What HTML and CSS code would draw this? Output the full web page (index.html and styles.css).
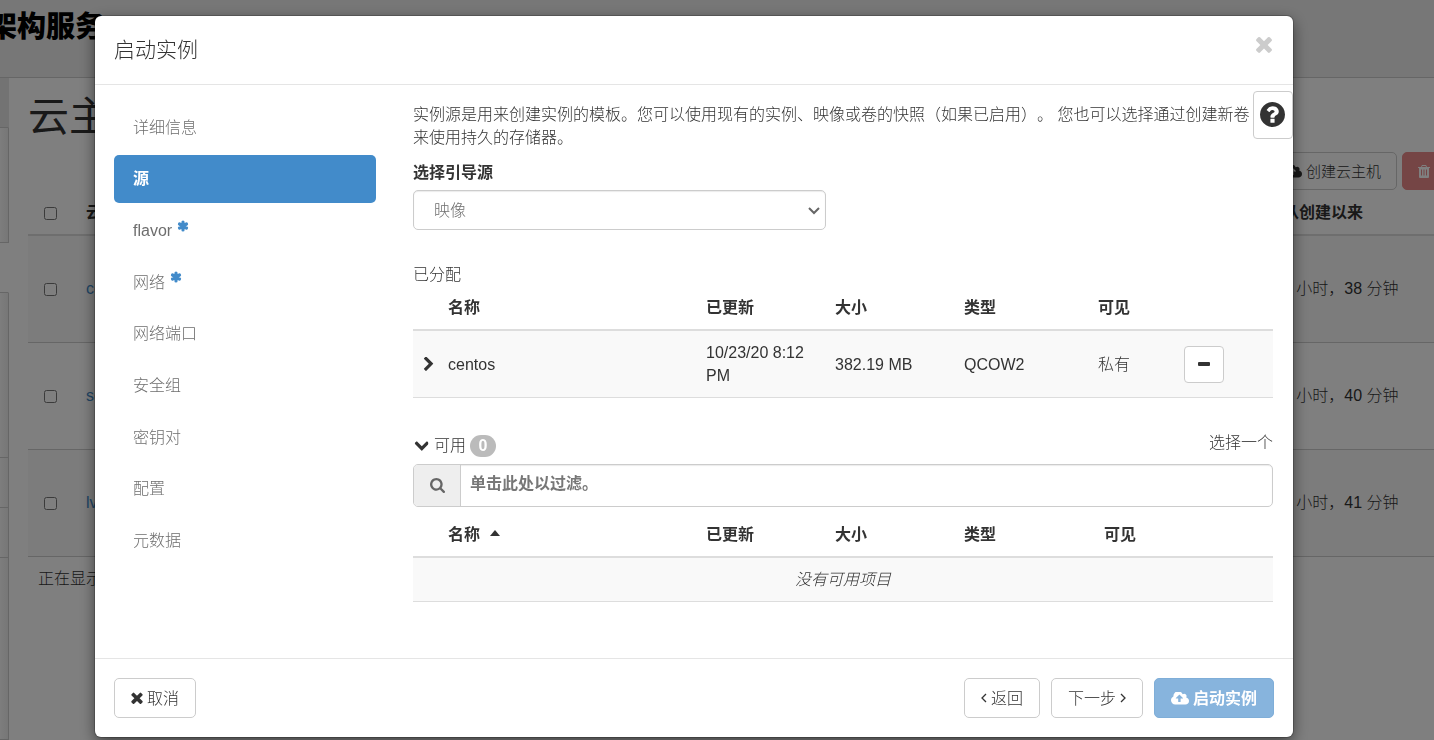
FILE: index.html
```html
<!DOCTYPE html>
<html lang="zh-CN">
<head>
<meta charset="utf-8">
<title>启动实例</title>
<link rel="stylesheet" href="styles.css">
</head>
<body>
<svg class="sprite" aria-hidden="true">
  <symbol id="times" viewBox="302 302 1188 1252"><path d="M1490 1322q0 40-28 68l-136 136q-28 28-68 28t-68-28l-294-294-294 294q-28 28-68 28t-68-28l-136-136q-28-28-28-68t28-68l294-294-294-294q-28-28-28-68t28-68l136-136q28-28 68-28t68 28l294 294 294-294q28-28 68-28t68 28l136 136q28 28 28 68t-28 68l-294 294 294 294q28 28 28 68z"/></symbol>
  <symbol id="chevron" viewBox="330 80 1060 1570"><path d="M1363 877l-742 742q-19 19-45 19t-45-19l-166-166q-19-19-19-45t19-45l531-531-531-531q-19-19-19-45t19-45l166-166q19-19 45-19t45 19l742 742q19 19 19 45t-19 45z"/></symbol>
  <symbol id="question" viewBox="128 128 1536 1536"><path d="M1024 1376v-192q0-14-9-23t-23-9h-192q-14 0-23 9t-9 23v192q0 14 9 23t23 9h192q14 0 23-9t9-23zm256-672q0-88-55.500-163t-138.500-116-170-41q-243 0-371 213-15 24 8 42l132 100q7 6 19 6 16 0 25-12 53-68 86-92 34-24 86-24 48 0 85.500 26t37.500 59q0 38-20 61t-68 45q-63 28-115.500 86.500t-52.500 125.500v36q0 14 9 23t23 9h192q14 0 23-9t9-23q0-19 21.500-49.500t54.500-49.500q32-18 49-28.500t46-35 44.500-48 28-60.500 12.500-81zm384 192q0 209-103 385.500t-279.500 279.500-385.500 103-385.500-103-279.500-279.500-103-385.500 103-385.500 279.500-279.500 385.500-103 385.500 103 279.500 279.500 103 385.500z"/></symbol>
  <symbol id="cloud" viewBox="-64 256 1920 1280"><path d="M1216 864q0-14-9-23l-352-352q-9-9-23-9t-23 9l-351 351q-10 12-10 24 0 14 9 23t23 9h224v352q0 13 9.500 22.500t22.500 9.500h192q13 0 22.500-9.500t9.500-22.500v-352h224q13 0 22.500-9.500t9.500-22.500zm640 288q0 159-112.500 271.500t-271.500 112.500h-1088q-185 0-316.500-131.500t-131.500-316.500q0-130 70-240t188-165q-2-30-2-43 0-212 150-362t362-150q156 0 285.500 87t188.500 231q71-62 166-62 106 0 181 75t75 181q0 76-41 138 130 31 213.500 135.500t83.500 238.500z"/></symbol>
  <symbol id="search" viewBox="64 128 1664 1664"><path d="M1216 832q0-185-131.500-316.500t-316.500-131.500-316.500 131.500-131.500 316.500 131.500 316.500 316.500 131.500 316.500-131.500 131.500-316.500zm512 832q0 52-38 90t-90 38q-54 0-90-38l-343-342q-179 124-399 124-143 0-273.500-55.500t-225-150-150-225-55.500-273.500 55.500-273.500 150-225 225-150 273.500-55.500 273.500 55.500 225 150 150 225 55.500 273.500q0 220-124 399l343 343q37 37 37 90z"/></symbol>
  <symbol id="asterisk" viewBox="0 0 12 12"><path d="M6 2v8M2.500 4l7 4M9.500 4l-7 4" fill="none" stroke="currentColor" stroke-width="3.200" stroke-linecap="round"/></symbol>
  <symbol id="angle" viewBox="0 0 6 10"><path d="M1 1l4 4-4 4" fill="none" stroke="currentColor" stroke-width="1.300"/></symbol>
  <symbol id="trash" viewBox="0 0 12 13"><path fill-rule="evenodd" d="M4 0h4l1 2h3v1h-1v9q0 1-1 1H2q-1 0-1-1V3H0V2h3zM4.400 1L4 2h4l-.4-1zM3 4.500v6h1v-6zM5.500 4.500v6h1v-6zM8 4.500v6h1v-6z"/></symbol>
</svg>

<div class="page">
  <header class="brand"><span class="brand-name">架构服务</span></header>
  <div class="columns">
    <nav class="sidebar" aria-label="侧边栏">
      <div class="side-top"></div>
      <div class="side-group"></div>
      <div class="side-current"></div>
      <div class="side-rest"></div>
      <div class="side-item"></div>
      <div class="side-item"></div>
      <div class="side-end"></div>
    </nav>
    <main class="content">
      <h1 class="page-title">云主机</h1>
      <div class="toolbar">
        <button class="tool" type="button"><svg class="cloud-icon"><use href="#cloud"/></svg>创建云主机</button>
        <button class="tool tool-danger" type="button"><svg class="trash-icon"><use href="#trash"/></svg>删除实例</button>
      </div>
      <table class="instances">
        <thead><tr><th class="check-cell"><input type="checkbox" aria-label="全选"></th><th>云主机名称</th><th class="age-cell">从创建以来</th></tr></thead>
        <tbody>
          <tr><td><input type="checkbox" aria-label="选择 centos"></td><td><a href="#">centos</a></td><td>1 小时，38 分钟</td></tr>
          <tr><td><input type="checkbox" aria-label="选择 server"></td><td><a href="#">server</a></td><td>1 小时，40 分钟</td></tr>
          <tr><td><input type="checkbox" aria-label="选择 lvs"></td><td><a href="#">lvs</a></td><td>1 小时，41 分钟</td></tr>
        </tbody>
      </table>
      <p class="count">正在显示 3 项</p>
    </main>
  </div>
</div>

<div class="backdrop">
  <section class="modal" role="dialog" aria-labelledby="modal-title">
    <header class="modal-header">
      <h2 class="modal-title" id="modal-title">启动实例</h2>
      <button class="close" type="button" aria-label="关闭"><svg class="close-icon"><use href="#times"/></svg></button>
    </header>
    <div class="modal-body">
      <button class="help" type="button" aria-label="帮助"><svg class="help-icon"><use href="#question"/></svg></button>
      <nav class="steps" aria-label="步骤">
        <a class="step" href="#">详细信息</a>
        <a class="step step-active" href="#" aria-current="step">源</a>
        <a class="step" href="#">flavor<svg class="required"><use href="#asterisk"/></svg></a>
        <a class="step" href="#">网络<svg class="required"><use href="#asterisk"/></svg></a>
        <a class="step" href="#">网络端口</a>
        <a class="step" href="#">安全组</a>
        <a class="step" href="#">密钥对</a>
        <a class="step" href="#">配置</a>
        <a class="step" href="#">元数据</a>
      </nav>
      <div class="source">
        <p class="intro">实例源是用来创建实例的模板。您可以使用现有的实例、映像或卷的快照（如果已启用）。 您也可以选择通过创建新卷来使用持久的存储器。</p>
        <label class="field-label" for="boot">选择引导源</label>
        <div class="select-wrap">
          <select class="select" id="boot"><option>映像</option></select>
          <svg class="select-arrow" viewBox="0 0 12 8"><path d="M1 1l5 5 5-5" fill="none" stroke="currentColor" stroke-width="2"/></svg>
        </div>
        <div class="allocated">已分配</div>
        <table class="grid">
          <colgroup><col class="c-toggle"><col class="c-name"><col class="c-mid"><col class="c-mid"><col class="c-type"><col class="c-seen"><col></colgroup>
          <thead><tr><th></th><th>名称</th><th>已更新</th><th>大小</th><th>类型</th><th>可见</th><th></th></tr></thead>
          <tbody><tr>
            <td class="toggle-cell"><button class="toggle" type="button" aria-label="展开"><svg class="chevron"><use href="#chevron"/></svg></button></td>
            <td>centos</td><td>10/23/20 8:12 PM</td><td>382.19 MB</td><td>QCOW2</td><td>私有</td>
            <td class="action-cell"><button class="minus" type="button" aria-label="移除"><span class="minus-bar"></span></button></td>
          </tr></tbody>
        </table>
        <div class="available">
          <button class="available-toggle" type="button"><svg class="chevron chevron-down"><use href="#chevron"/></svg>可用<span class="badge">0</span></button>
          <span class="pick">选择一个</span>
        </div>
        <div class="search">
          <label class="search-addon" for="filter"><svg class="search-icon"><use href="#search"/></svg></label>
          <input class="search-input" id="filter" type="text" placeholder="单击此处以过滤。" aria-label="过滤">
        </div>
        <table class="grid">
          <colgroup><col class="c-toggle"><col class="c-name"><col class="c-mid"><col class="c-mid"><col class="c-last"><col></colgroup>
          <thead><tr><th></th><th>名称<span class="sort"></span></th><th>已更新</th><th>大小</th><th>类型</th><th>可见</th></tr></thead>
          <tbody><tr><td class="empty" colspan="6">没有可用项目</td></tr></tbody>
        </table>
      </div>
    </div>
    <footer class="modal-footer">
      <button class="btn btn-cancel" type="button"><svg class="times-icon"><use href="#times"/></svg>取消</button>
      <button class="btn" type="button"><svg class="angle angle-left"><use href="#angle"/></svg>返回</button>
      <button class="btn" type="button">下一步<svg class="angle"><use href="#angle"/></svg></button>
      <button class="btn btn-primary" type="button"><svg class="cloud-icon"><use href="#cloud"/></svg>启动实例</button>
    </footer>
  </section>
</div>
</body>
</html>
```
FILE: styles.css
```css
* { box-sizing: border-box; }
html, body { height: 100%; }
body {
  margin: 0;
  overflow: hidden;
  background: #fff;
  color: #333;
  font: 300 16px/23px "Liberation Sans", "Noto Sans CJK SC", sans-serif;
  text-spacing-trim: space-all;
}
button, input, select { font: inherit; color: inherit; margin: 0; }
button { cursor: pointer; }
svg { fill: currentColor; flex: none; }
a { color: #428bca; text-decoration: none; }
.sprite { display: none; }

/* Page behind the dialog */
.page { height: 100%; overflow: hidden; display: flex; flex-direction: column; }
.brand { height: 78px; flex: none; background: #eee; border-bottom: 1px solid #ccc; padding-top: 9px; }
.brand-name {
  display: block;
  margin-left: -12px;
  color: #000;
  font-size: 29px;
  font-weight: 900;
  line-height: 36px;
  white-space: nowrap;
}
.columns { flex: 1; display: flex; min-height: 0; }
.sidebar { width: 9px; flex: none; display: flex; flex-direction: column; }
.sidebar > div { border-bottom: 1px solid #ccc; border-right: 1px solid #ccc; background: linear-gradient(to right, #fbfbfb, #eee); }
.sidebar .side-top { height: 50px; background: #e7e7e7; border-right-color: #e7e7e7; }
.side-group { height: 115px; }
.sidebar .side-current { height: 50px; background: #fff; border-right-color: #fff; }
.side-rest { height: 165px; }
.side-item { height: 50px; }
.side-end { flex: 1; }
.content { flex: 1; min-width: 0; padding: 16px 0 0 19px; }
.page-title { margin: 0; font-size: 41px; line-height: 46px; font-weight: 400; }
.toolbar { display: flex; justify-content: flex-end; gap: 5px; margin: 12px -82px 0 0; }
.tool {
  display: flex;
  align-items: center;
  gap: 4px;
  height: 38px;
  padding: 0 15px;
  border: 1px solid #ccc;
  border-radius: 5px;
  background: #fff;
  font-size: 15px;
  white-space: nowrap;
}
.tool-danger { width: 114px; background: #ea8b8b; border-color: #ea8b8b; color: #fff; gap: 5px; }
.trash-icon { width: 12px; height: 13px; }
.instances { width: 100%; border-collapse: collapse; table-layout: fixed; }
.instances th { height: 45px; padding: 0 10px; text-align: left; border-bottom: 2px solid #ddd; }
.instances td { height: 107px; padding: 0 10px; border-bottom: 1px solid #ccc; white-space: nowrap; }
.instances tbody tr:nth-child(odd) { background: #f9f9f9; }
.instances input { display: block; width: 13px; height: 13px; margin: 2px 0 0 6px; }
.check-cell { width: 48px; }
.age-cell { width: 161px; }
.count { margin: 10px; }

/* Dialog */
.backdrop { position: fixed; inset: 0; overflow: hidden; padding: 16px 141px 0 95px; background: rgba(0, 0, 0, .5); }
.modal {
  border-radius: 6px;
  background: #fff;
  box-shadow: 0 0 0 1px rgba(0, 0, 0, .2), 0 5px 15px rgba(0, 0, 0, .5);
}
.modal-header { display: flex; justify-content: space-between; padding: 19px 19px 20px; border-bottom: 1px solid #e5e5e5; }
.modal-title { margin: 0; font-size: 21px; line-height: 29px; font-weight: 300; }
.close { height: 18px; padding: 0 2px; border: 0; background: none; color: #ccc; }
.close-icon { display: block; width: 16px; height: 17px; }
.modal-body { position: relative; display: grid; grid-template-columns: 262px 1fr; gap: 37px; padding: 18px 20px 56px 19px; }
.help { position: absolute; top: 6px; right: 0; width: 40px; height: 48px; padding: 0 0 2px 6px; border: 1px solid #ccc; border-radius: 4px; background: #fff; }
.help-icon { display: block; width: 25px; height: 25px; }
.steps { display: grid; grid-auto-rows: 1fr; gap: 3px; align-self: start; min-height: 462px; }
.step { display: flex; align-items: center; padding: 0 19px; border-radius: 5px; color: #6e6e6e; }
.step-active { background: #428bca; color: #fff; font-weight: 700; }
.required { width: 12px; height: 12px; margin: 0 0 10px 5px; color: #428bca; }

.intro { margin: 0 0 12px; padding-right: 16px; }
.field-label { display: block; margin-bottom: 6px; font-weight: 700; }
.select-wrap { position: relative; width: 48%; }
.select {
  display: block;
  width: 100%;
  height: 40px;
  padding: 0 20px;
  appearance: none;
  border: 1px solid #ccc;
  border-radius: 5px;
  background: #fff;
  box-shadow: inset 0 1px 1px rgba(0, 0, 0, .08);
  color: #6e6e6e;
}
.select-arrow { position: absolute; right: 6px; top: 17px; width: 12px; height: 8px; color: #666; pointer-events: none; }
.allocated { margin-top: 33px; }
.grid { width: 100%; border-collapse: separate; border-spacing: 0; table-layout: fixed; }
.grid th, .grid td { padding: 10px; text-align: left; }
.grid th { height: 45px; border-bottom: 2px solid #ddd; }
.grid td { background: #f9f9f9; border-bottom: 1px solid #ddd; }
.grid .toggle-cell { padding-right: 0; }
.grid .action-cell { padding-top: 0; padding-bottom: 0; }
.grid .empty { text-align: center; font-style: italic; }
.c-toggle { width: 25px; }
.c-name { width: 30%; }
.c-mid { width: 15%; }
.c-type { width: 134px; }
.c-seen { width: 10%; }
.c-last { width: 140px; }
.toggle { display: block; padding: 0; border: 0; background: none; }
.chevron { display: block; width: 11px; height: 14px; }
.chevron-down { transform: rotate(90deg); margin: 0 3px 0 3px; }
.minus { display: grid; place-items: center; width: 40px; height: 37px; border: 1px solid #ccc; border-radius: 4px; background: #fff; }
.minus-bar { width: 12px; height: 4px; border-radius: 1px; background: #333; }
.available { display: flex; justify-content: space-between; align-items: flex-start; margin-top: 33px; height: 33px; }
.available-toggle { display: flex; align-items: center; gap: 4px; height: 29px; padding: 0; border: 0; background: none; }
.badge { width: 26px; height: 22px; border-radius: 11px; background: #bbb; color: #fff; font-weight: 700; line-height: 22px; text-align: center; }
.search { display: flex; height: 43px; margin-bottom: 6px; border: 1px solid #ccc; border-radius: 5px; box-shadow: inset 0 1px 1px rgba(0, 0, 0, .08); }
.search-addon { display: grid; place-items: center; width: 47px; border-right: 1px solid #ccc; border-radius: 4px 0 0 4px; background: #eee; color: #666; }
.search-icon { width: 15px; height: 15px; }
.search-input { flex: 1; min-width: 0; padding: 0 9px 4px; border: 0; background: none; font-weight: 700; }
.search-input::placeholder { color: #777; }
.sort { display: inline-block; margin-left: 10px; border: 5px solid transparent; border-top: 0; border-bottom: 6px solid #333; vertical-align: 4px; }

.modal-footer { display: flex; gap: 11px; padding: 19px; border-top: 1px solid #e5e5e5; }
.btn { display: flex; align-items: center; gap: 4px; height: 40px; padding: 0 16px; border: 1px solid #ccc; border-radius: 5px; background: #fff; white-space: nowrap; }
.btn-cancel { margin-right: auto; }
.btn-primary { background: #87b4dd; border-color: #7faed8; color: #fff; font-weight: 700; }
.times-icon { width: 12px; height: 12px; }
.cloud-icon { width: 18px; height: 13px; }
.angle { width: 6px; height: 10px; }
.angle-left { transform: scaleX(-1); }
```
